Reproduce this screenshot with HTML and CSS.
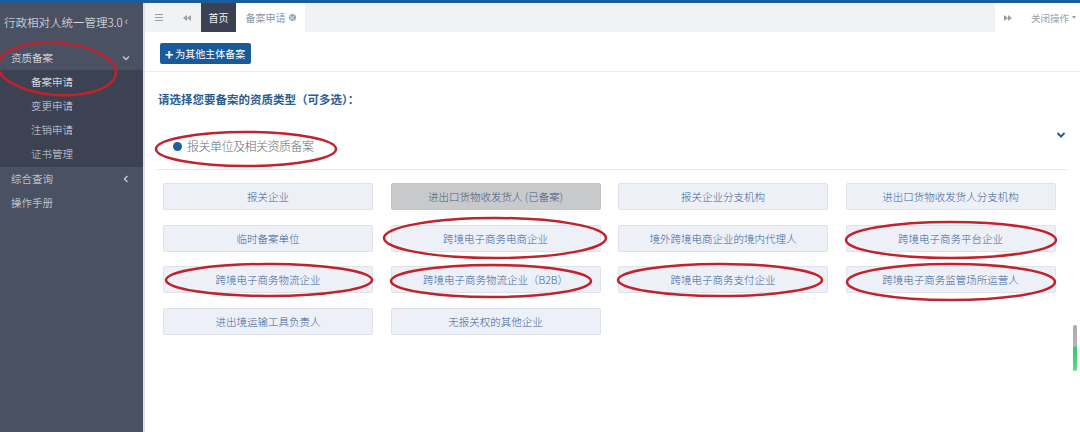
FILE: index.html
```html
<!DOCTYPE html>
<html lang="zh-CN">
<head>
<meta charset="utf-8"/>
<meta content="width=device-width, initial-scale=1.0" name="viewport"/>
<title>行政相对人统一管理3.0</title>
<link rel="stylesheet" href="styles.css">
</head>
<body>
<div class="topline"></div>
<div class="frame">

<!-- left menu -->
<aside class="sidebar">
    <div class="brand">行政相对人统一管理3.0<span class="brand-arrow">‹</span></div>
    <ul class="menu">
        <li class="menu-item open">
            <div class="menu-title">资质备案
                <svg class="caret" width="8" height="6" viewBox="0 0 8 6"><path d="M1 1.5 L4 4.5 L7 1.5" fill="none" stroke="#c9ccd4" stroke-width="1.3"/></svg>
            </div>
            <ul class="submenu">
                <li class="active">备案申请</li>
                <li>变更申请</li>
                <li>注销申请</li>
                <li>证书管理</li>
            </ul>
        </li>
        <li class="menu-item">
            <div class="menu-title">综合查询
                <svg class="caret" width="8" height="8" viewBox="0 0 8 8"><path d="M5.5 1 L2.5 4 L5.5 7" fill="none" stroke="#c9ccd4" stroke-width="1.3"/></svg>
            </div>
        </li>
        <li class="menu-item">
            <div class="menu-title">操作手册</div>
        </li>
    </ul>
</aside>

<main class="main">
    <!-- tab bar -->
    <div class="tabbar">
        <div class="tab-btn">
            <svg width="8" height="7" viewBox="0 0 8 7"><path d="M0 0.5 H8 M0 3.5 H8 M0 6.5 H8" stroke="#9aa0a8" stroke-width="1"/></svg>
        </div>
        <div class="tab-btn">
            <svg width="8" height="6" viewBox="0 0 8 6"><path d="M4 0 L0 3 L4 6 Z M8 0 L4 3 L8 6 Z" fill="#9aa0a8"/></svg>
        </div>
        <div class="tab tab-home">首页</div>
        <div class="tab tab-current">备案申请<span class="tab-close">×</span></div>
        <div class="tab-fill"></div>
        <div class="tab-right">
            <svg width="8" height="6" viewBox="0 0 8 6"><path d="M0 0 L4 3 L0 6 Z M4 0 L8 3 L4 6 Z" fill="#9aa0a8"/></svg>
            <span class="close-ops">关闭操作<span class="ops-caret"></span></span>
        </div>
    </div>

    <div class="toolbar">
        <button class="btn-add"><span class="plus">+</span>为其他主体备案</button>
    </div>

    <section class="content">
        <h3 class="pick-title">请选择您要备案的资质类型（可多选）：</h3>

        <div class="group-head">
            <label class="group-label"><span class="dot"></span>报关单位及相关资质备案</label>
            <svg class="group-toggle" width="10" height="8" viewBox="0 0 10 8"><path d="M1.5 2 L5 5.5 L8.5 2" fill="none" stroke="#1f5f9e" stroke-width="2"/></svg>
        </div>

        <div class="type-grid">
            <div class="type-cell">报关企业</div>
            <div class="type-cell done">进出口货物收发货人 (已备案)</div>
            <div class="type-cell">报关企业分支机构</div>
            <div class="type-cell">进出口货物收发货人分支机构</div>

            <div class="type-cell">临时备案单位</div>
            <div class="type-cell">跨境电子商务电商企业</div>
            <div class="type-cell">境外跨境电商企业的境内代理人</div>
            <div class="type-cell">跨境电子商务平台企业</div>

            <div class="type-cell">跨境电子商务物流企业</div>
            <div class="type-cell">跨境电子商务物流企业（B2B）</div>
            <div class="type-cell">跨境电子商务支付企业</div>
            <div class="type-cell">跨境电子商务监管场所运营人</div>

            <div class="type-cell">进出境运输工具负责人</div>
            <div class="type-cell">无报关权的其他企业</div>
        </div>
    </section>

    <div class="scroll-thumb"></div>
</main>
</div>

<!-- red hand-drawn marks over the screenshot -->
<svg class="marks" width="1080" height="432" viewBox="0 0 1080 432">
    <g fill="none" stroke="#c0232c" stroke-width="2.5">
        <ellipse cx="57" cy="69" rx="59" ry="26" transform="rotate(4 57 69)"/>
        <ellipse cx="246" cy="149" rx="90" ry="17"/>
        <ellipse cx="495" cy="238" rx="111" ry="20"/>
        <ellipse cx="269" cy="280" rx="103" ry="16"/>
        <ellipse cx="491" cy="281" rx="100" ry="16"/>
        <ellipse cx="951" cy="240" rx="105" ry="18"/>
        <ellipse cx="720" cy="280" rx="102" ry="16"/>
        <ellipse cx="951" cy="282" rx="104" ry="18"/>
    </g>
</svg>
</body>
</html>
```

FILE: styles.css
```css
body {
    margin: 0;
    padding: 0;
    font-family: "Noto Sans CJK SC", "Noto Sans", sans-serif;
    background: #ffffff;
    width: 1080px;
    height: 432px;
    overflow: hidden;
    position: relative;
}

.topline {
    height: 3px;
    background: #1b5c9c;
}

.frame {
    display: flex;
    height: 429px;
}

/* sidebar */
.sidebar {
    width: 143px;
    flex: none;
    background: #4a5163;
    color: #e6e8ec;
}

.brand {
    height: 43px;
    line-height: 39px;
    padding-left: 4px;
    font-size: 11.5px;
    font-weight: 300;
    color: #eef0f3;
    white-space: nowrap;
}

.brand-arrow {
    font-size: 11px;
    margin-left: 2px;
    position: relative;
    top: -2px;
}

.menu, .submenu {
    list-style: none;
    margin: 0;
    padding: 0;
}

.menu-title {
    height: 24px;
    line-height: 24px;
    padding: 0 13px 0 11px;
    font-size: 10.5px;
    font-weight: 300;
    display: flex;
    align-items: center;
    justify-content: space-between;
    color: #e4e6ea;
}

.menu-item.open .menu-title {
    color: #f2f3f5;
}

.submenu {
    background: #3c4252;
    padding-bottom: 1px;
}

.submenu li {
    height: 24px;
    line-height: 24px;
    padding-left: 31px;
    font-size: 10.5px;
    font-weight: 300;
    color: #d6d9e0;
}

.submenu li.active {
    color: #ffffff;
}

/* main */
.main {
    flex: 1;
    border-left: 2px solid #dfe1e6;
    position: relative;
}

.tabbar {
    height: 29px;
    display: flex;
    align-items: stretch;
    background: #f1f2f3;
}

.tab-btn {
    width: 28px;
    display: flex;
    align-items: center;
    justify-content: center;
}

.tab {
    display: flex;
    align-items: center;
    justify-content: center;
    font-size: 10px;
}

.tab-home {
    width: 35px;
    background: #3c4152;
    color: #f4f4f4;
}

.tab-current {
    width: 69px;
    background: #ffffff;
    color: #8a97a8;
}

.tab-close {
    display: inline-block;
    width: 7px;
    height: 7px;
    line-height: 7px;
    margin-left: 3px;
    border-radius: 50%;
    background: #93a7c2;
    color: #ffffff;
    font-size: 7px;
    text-align: center;
}

.tab-fill {
    flex: 1;
}

.tab-right {
    width: 85px;
    background: #ffffff;
    display: flex;
    align-items: center;
    padding-left: 9px;
    box-sizing: border-box;
    gap: 19px;
}

.close-ops {
    font-size: 9.5px;
    color: #9aa0a8;
    display: flex;
    align-items: center;
}

.ops-caret {
    width: 0;
    height: 0;
    margin-left: 3px;
    border-left: 2.5px solid transparent;
    border-right: 2.5px solid transparent;
    border-top: 3px solid #9aa0a8;
}

.toolbar {
    height: 40px;
    padding: 11px 0 0 15px;
    box-sizing: border-box;
    border-bottom: 1px solid #ececef;
}

.btn-add {
    height: 21px;
    padding: 0 6px 0 5px;
    border: none;
    border-radius: 2px;
    background: #195b9a;
    color: #ffffff;
    font-family: "Noto Sans CJK SC", sans-serif;
    font-size: 10px;
    display: flex;
    align-items: center;
}

.plus {
    font-size: 14px;
    font-weight: bold;
    margin-right: 2px;
    line-height: 1;
}

.content {
    padding: 0 13px 0 12px;
}

.pick-title {
    margin: 19px 0 0 1px;
    font-size: 11.5px;
    line-height: 16px;
    font-weight: bold;
    color: #2b5d90;
}

.group-head {
    margin-top: 22px;
    padding-bottom: 14px;
    border-bottom: 1px solid #e9eaec;
    display: flex;
    justify-content: space-between;
}

.group-label {
    margin-top: 8px;
    margin-left: 16px;
    line-height: 18px;
    font-size: 12px;
    font-weight: 300;
    letter-spacing: -0.5px;
    color: #656b74;
    display: flex;
    align-items: center;
}

.dot {
    width: 9px;
    height: 9px;
    border-radius: 50%;
    background: #1f5f9e;
    margin-right: 5px;
}

.group-toggle {
    margin-top: 2px;
    margin-right: 1px;
}

.type-grid {
    display: grid;
    grid-template-columns: repeat(4, 210px);
    column-gap: 17.5px;
    row-gap: 14.5px;
    margin: 13px 0 0 6px;
}

.type-cell {
    height: 27px;
    box-sizing: border-box;
    border: 1px solid #dfe2ea;
    border-radius: 2px;
    background: #eef0f7;
    color: #36629a;
    font-size: 10.5px;
    font-weight: 300;
    display: flex;
    align-items: center;
    justify-content: center;
    white-space: nowrap;
}

.type-cell.done {
    background: #c8c9cb;
    border-color: #c2c3c6;
    color: #45597a;
}

.scroll-thumb {
    position: absolute;
    right: 3px;
    top: 322px;
    width: 4px;
    height: 46px;
    border-radius: 2px;
    background: linear-gradient(#a9abad 0%, #b4b6b8 45%, #3cc86a 50%, #5fd888 100%);
}

.marks {
    position: absolute;
    left: 0;
    top: 0;
    pointer-events: none;
}
```
